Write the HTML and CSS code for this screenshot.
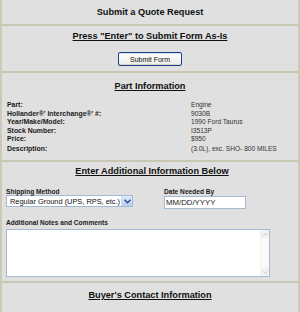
FILE: index.html
```html
<!DOCTYPE html>
<html lang="en">
<head>
    <meta charset="UTF-8">
    <title>Submit a Quote Request</title>
    <link rel="stylesheet" href="styles.css">
</head>
<body>
    <div class="quote">
        <div class="section title-section">
            <h1>Submit a Quote Request</h1>
        </div>

        <div class="section enter-section">
            <h2>Press "Enter" to Submit Form As-Is</h2>
            <button type="button" class="submit-btn">Submit Form</button>
        </div>

        <div class="section part-section">
            <h2>Part Information</h2>
            <div class="part-grid">
                <span class="label">Part:</span><span class="value">Engine</span>
                <span class="label">Hollander&reg;' Interchange&reg;' #:</span><span class="value">9030B</span>
                <span class="label">Year/Make/Model:</span><span class="value">1990 Ford Taurus</span>
                <span class="label">Stock Number:</span><span class="value">I3513P</span>
                <span class="label">Price:</span><span class="value">$950</span>
                <span class="label desc">Description:</span><span class="value desc">(3.0L), exc. SHO- 800 MILES</span>
            </div>
        </div>

        <div class="section extra-section">
            <h2>Enter Additional Information Below</h2>
            <div class="field-row">
                <div class="field ship">
                    <label>Shipping Method</label>
                    <div class="select">
                        <span class="select-text">Regular Ground (UPS, RPS, etc.)</span>
                        <span class="select-arrow">
                            <svg width="7" height="5" viewBox="0 0 7 5"><path d="M0.5 0.8 L3.5 3.8 L6.5 0.8" fill="none" stroke="#2c4a8a" stroke-width="1.4"/></svg>
                        </span>
                    </div>
                </div>
                <div class="field date">
                    <label>Date Needed By</label>
                    <div class="text-input">MM/DD/YYYY</div>
                </div>
            </div>
            <label class="notes-label">Additional Notes and Comments</label>
            <div class="notes">
                <div class="notes-area"></div>
                <div class="scrollbar">
                    <span class="arrow">
                        <svg width="5" height="3" viewBox="0 0 5 3"><path d="M0.5 2.6 L2.5 0.6 L4.5 2.6" fill="none" stroke="#c3c3bd" stroke-width="1"/></svg>
                    </span>
                    <span class="arrow">
                        <svg width="5" height="3" viewBox="0 0 5 3"><path d="M0.5 0.4 L2.5 2.4 L4.5 0.4" fill="none" stroke="#c3c3bd" stroke-width="1"/></svg>
                    </span>
                </div>
            </div>
        </div>

        <div class="section buyer-section">
            <h2>Buyer's Contact Information</h2>
        </div>
    </div>
</body>
</html>
```

FILE: styles.css
```css
body {
    margin: 0;
    padding: 0;
    background-color: #e0e0e0;
    font-family: "Liberation Sans", Arial, sans-serif;
    color: #111;
}

.quote {
    border-left: 2px solid #cbc9b7;
    border-right: 2px solid #cbc9b7;
    height: 312px;
    box-sizing: border-box;
}

.section {
    border-bottom: 2px solid #c9c7b4;
    box-sizing: border-box;
}

h1, h2 {
    margin: 0;
    text-align: center;
    font-size: 9.2px;
    font-weight: bold;
    line-height: 11px;
}

h2 {
    text-decoration: underline;
}

.title-section {
    height: 26px;
    padding-top: 7px;
}

.enter-section {
    height: 47px;
    padding-top: 5px;
    display: flex;
    flex-direction: column;
    align-items: center;
}

.submit-btn {
    margin-top: 10px;
    width: 64px;
    height: 14px;
    padding: 0;
    font-family: "Liberation Sans", Arial, sans-serif;
    font-size: 7px;
    color: #111;
    background: linear-gradient(#ffffff, #ecebe6);
    border: 1px solid #1c3f88;
    border-radius: 2px;
    box-shadow: inset 0 -1px 0 #d6d0c5, inset 0 1px 0 #cfe0f8;
}

.part-section {
    height: 89px;
    padding-top: 8px;
}

.part-grid {
    display: grid;
    grid-template-columns: 184px 1fr;
    padding-left: 5px;
    margin-top: 9px;
    line-height: 8.6px;
}

.label {
    font-size: 6.9px;
    font-weight: bold;
    color: #1a1a1a;
}

.value {
    font-size: 6.6px;
    color: #333;
}

.desc {
    padding-top: 1.4px;
}

.extra-section {
    height: 121px;
    padding: 4px 0 0 4px;
}

.field-row {
    display: flex;
    margin-top: 11px;
}

.field label,
.notes-label {
    display: block;
    font-size: 6.6px;
    font-weight: bold;
    line-height: 8px;
    color: #1a1a1a;
}

.ship {
    width: 158px;
}

.select {
    display: flex;
    align-items: center;
    width: 127px;
    height: 12px;
    box-sizing: border-box;
    border: 1px solid #a5b9d3;
    background: #fff;
    margin-top: -1px;
}

.select-text {
    flex: 1;
    font-size: 7.4px;
    padding-left: 3px;
    white-space: nowrap;
}

.select-arrow {
    width: 11px;
    height: 10px;
    display: flex;
    align-items: center;
    justify-content: center;
    background: linear-gradient(#dfe8fb, #b9cdf3);
    border-left: 1px solid #d0dcf3;
    box-sizing: border-box;
}

.text-input {
    width: 82px;
    height: 13px;
    box-sizing: border-box;
    border: 1px solid #a5b9d3;
    background: #fff;
    font-size: 7.8px;
    line-height: 11px;
    padding-left: 1px;
    color: #222;
}

.notes-label {
    margin-top: 10px;
}

.notes {
    display: flex;
    width: 264px;
    height: 48px;
    box-sizing: border-box;
    border: 1px solid #a5b9d3;
    background: #fff;
    margin-top: 2px;
}

.notes-area {
    flex: 1;
}

.scrollbar {
    width: 8px;
    display: flex;
    flex-direction: column;
    justify-content: space-between;
    background: #fafaf8;
    border-left: 1px solid #f0f0ec;
}

.arrow {
    height: 8px;
    display: flex;
    align-items: center;
    justify-content: center;
    background: #f2f2ee;
}

.buyer-section {
    border-bottom: none;
    padding-top: 7px;
}
```
